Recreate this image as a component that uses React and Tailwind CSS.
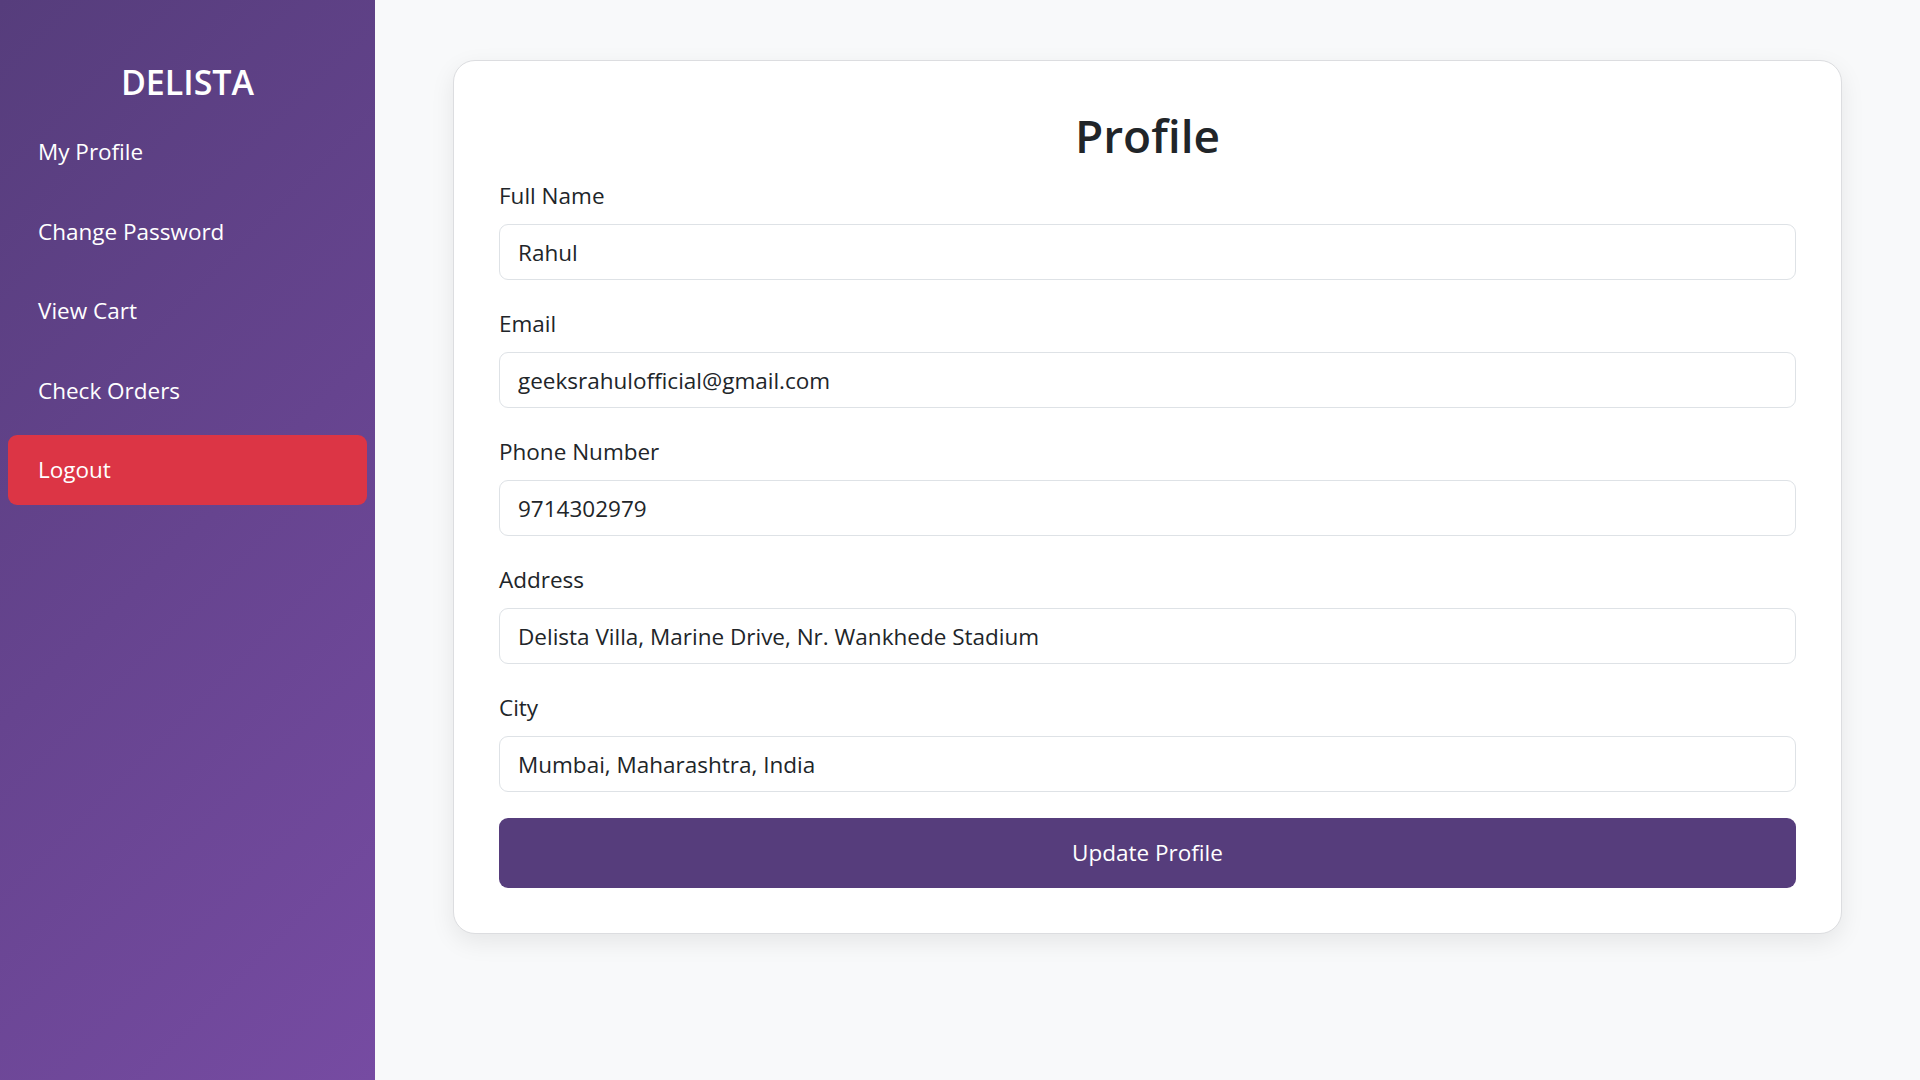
import React, { useState } from 'react';

const links = ['My Profile', 'Change Password', 'View Cart', 'Check Orders'];

const fields = [
  { label: 'Full Name', value: 'Rahul' },
  { label: 'Email', value: 'geeksrahulofficial@gmail.com' },
  { label: 'Phone Number', value: '9714302979' },
  { label: 'Address', value: 'Delista Villa, Marine Drive, Nr. Wankhede Stadium' },
  { label: 'City', value: 'Mumbai, Maharashtra, India' },
];

const Sidebar = () => (
  <aside className="w-[375px] shrink-0 min-h-screen bg-[linear-gradient(135deg,#563d7c,#764ba2)] px-[8px] pt-[61px] text-white">
    <h4 className="text-center text-[34px] leading-[43px] font-semibold mb-[13px]">DELISTA</h4>
    <nav className="flex flex-col gap-[9.5px]">
      {links.map((l) => (
        <a key={l} href="#" className="block rounded-[9px] px-[30px] py-[17px] text-[22.5px] leading-[36px] text-white">
          {l}
        </a>
      ))}
      <a href="#" className="block rounded-[9px] bg-[#dc3545] px-[30px] py-[17px] text-[22.5px] leading-[36px] text-white">
        Logout
      </a>
    </nav>
  </aside>
);

export default function App() {
  const [form, setForm] = useState(fields);

  return (
    <div className="flex min-h-screen bg-[#f8f9fa] font-['Open_Sans',sans-serif] text-[#212529]">
      <Sidebar />
      <main className="flex-1 px-[78px] pt-[60px]">
        <div className="rounded-[22px] border border-[#dcdde0] bg-white px-[45px] pt-[46px] pb-[45px] shadow-[0_8px_24px_rgba(0,0,0,0.08)]">
          <h2 className="text-center text-[46px] leading-[57px] font-semibold mb-[14px]">Profile</h2>
          <form onSubmit={(e) => e.preventDefault()}>
            {form.map((f, i) => (
              <div key={f.label} className="mb-[26px]">
                <label className="block text-[22.5px] leading-[36px] mb-[10px]">{f.label}</label>
                <input
                  value={f.value}
                  onChange={(e) => {
                    const next = [...form];
                    next[i] = { ...f, value: e.target.value };
                    setForm(next);
                  }}
                  className="block w-full h-[56px] rounded-[9px] border border-[#dee2e6] bg-white px-[18px] text-[22.5px] text-[#212529] outline-none"
                />
              </div>
            ))}
            <button
              type="submit"
              className="w-full h-[70px] rounded-[9px] bg-[#563d7c] text-[22.5px] text-white"
            >
              Update Profile
            </button>
          </form>
        </div>
      </main>
    </div>
  );
}
